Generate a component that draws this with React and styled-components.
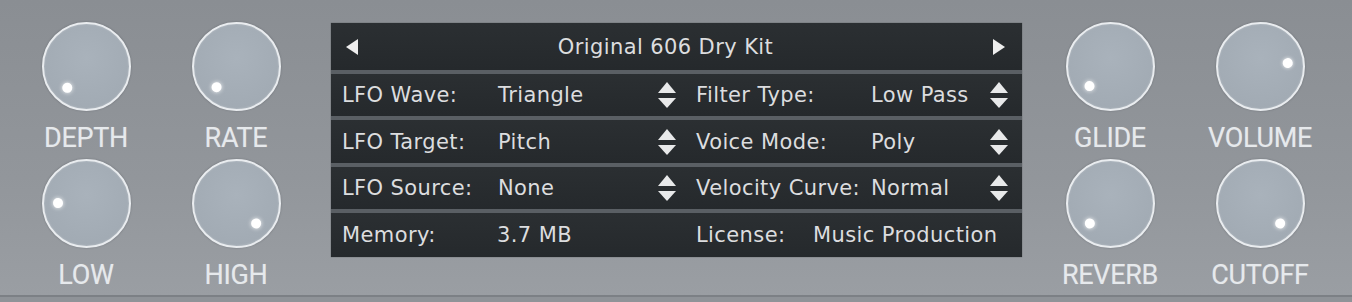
import React from "react";
import styled, { createGlobalStyle } from "styled-components";

const GlobalStyle = createGlobalStyle`
  html, body {
    margin: 0;
    padding: 0;
    background: #8f9398;
  }
`;

const leftKnobs = [
  { label: "DEPTH", angle: 222 },
  { label: "RATE", angle: 224 },
  { label: "LOW", angle: 272 },
  { label: "HIGH", angle: 134 },
];

const rightKnobs = [
  { label: "GLIDE", angle: 227 },
  { label: "VOLUME", angle: 82 },
  { label: "REVERB", angle: 226 },
  { label: "CUTOFF", angle: 134 },
];

const selectRows = [
  ["LFO Wave:", "Triangle", "Filter Type:", "Low Pass"],
  ["LFO Target:", "Pitch", "Voice Mode:", "Poly"],
  ["LFO Source:", "None", "Velocity Curve:", "Normal"],
];

const Spinner = () => (
  <SpinnerIcon width="18" height="26" viewBox="0 0 18 26">
    <polygon points="9,0 18,11 0,11" fill="#e8e9ea" />
    <polygon points="0,16 18,16 9,26" fill="#e8e9ea" />
  </SpinnerIcon>
);

const KnobGroup = ({ knobs }) => (
  <KnobGrid>
    {knobs.map((k) => (
      <KnobCell key={k.label}>
        <Knob>
          <Dot $angle={k.angle} />
        </Knob>
        <KnobLabel>{k.label}</KnobLabel>
      </KnobCell>
    ))}
  </KnobGrid>
);

const App = () => {
  return (
    <>
      <GlobalStyle />
      <Frame>
        <KnobGroup knobs={leftKnobs} />
        <Display>
          <Header>
            <svg width="12" height="16" viewBox="0 0 12 16">
              <polygon points="12,0 12,16 0,8" fill="#eeeeee" />
            </svg>
            <Title>Original 606 Dry Kit</Title>
            <svg width="12" height="16" viewBox="0 0 12 16">
              <polygon points="0,0 12,8 0,16" fill="#eeeeee" />
            </svg>
          </Header>
          {selectRows.map((r) => (
            <SelectRow key={r[0]}>
              <Text>{r[0]}</Text>
              <Text>{r[1]}</Text>
              <Spinner />
              <Text>{r[2]}</Text>
              <Text>{r[3]}</Text>
              <Spinner />
            </SelectRow>
          ))}
          <InfoRow>
            <Text>Memory:</Text>
            <Text>3.7 MB</Text>
            <Text>License:</Text>
            <Text>Music Production</Text>
          </InfoRow>
        </Display>
        <RightGroup>
          <KnobGroup knobs={rightKnobs} />
        </RightGroup>
      </Frame>
    </>
  );
};

const Frame = styled.div`
  width: 1352px;
  height: 297px;
  box-sizing: border-box;
  display: flex;
  align-items: flex-start;
  padding-left: 11px;
  background: linear-gradient(180deg, #8a8e93 0%, #92969b 60%, #9a9ea3 100%);
  border-bottom: 2px solid #7c8085;
`;

const KnobGrid = styled.div`
  display: grid;
  grid-template-columns: 150px 150px;
  row-gap: 6px;
  margin-top: 22px;
`;

const RightGroup = styled.div`
  margin-left: 13px;
`;

const KnobCell = styled.div`
  display: flex;
  flex-direction: column;
  align-items: center;
`;

const Knob = styled.div`
  position: relative;
  width: 89px;
  height: 89px;
  box-sizing: border-box;
  border-radius: 50%;
  background: radial-gradient(circle at 50% 40%, #a9b2bb 0%, #a2abb4 70%, #9ea7b0 100%);
  border: 2.5px solid #e9ecef;
  box-shadow: 0 0 2px rgba(60, 64, 70, 0.45), inset 0 0 2px rgba(255, 255, 255, 0.3);
`;

const Dot = styled.span`
  position: absolute;
  left: 50%;
  top: 50%;
  width: 10px;
  height: 10px;
  margin: -5px 0 0 -5px;
  border-radius: 50%;
  background: #ffffff;
  box-shadow: 0 0 4px rgba(255, 255, 255, 0.9);
  transform: rotate(${(p) => p.$angle}deg) translateY(-28px);
`;

const KnobLabel = styled.div`
  margin-top: 12px;
  height: 30px;
  line-height: 30px;
  font-family: Roboto, "Liberation Sans", sans-serif;
  font-size: 27px;
  letter-spacing: -0.3px;
  color: #e6e9ec;
  text-shadow: 0 0 1px rgba(255, 255, 255, 0.3);
`;

const Display = styled.div`
  width: 691px;
  margin-left: 20px;
  margin-top: 23px;
  display: flex;
  flex-direction: column;
  gap: 4px;
  background: #5a5f64;
  box-shadow: 0 0 1px rgba(30, 32, 36, 0.6);
  font-family: "DejaVu Sans", Verdana, sans-serif;
  font-size: 21px;
  letter-spacing: 0.4px;
  color: #dcdddf;
`;

const RowBase = styled.div`
  background: linear-gradient(180deg, #2b2f32 0%, #25292c 100%);
  display: grid;
  align-items: center;
  white-space: nowrap;
`;

const Header = styled(RowBase)`
  height: 47px;
  grid-template-columns: 12px 1fr 12px;
  padding: 0 17px 0 15px;
`;

const Title = styled.div`
  text-align: center;
  padding-right: 20px;
`;

const SelectRow = styled(RowBase)`
  height: 42px;
  padding-left: 11px;
  grid-template-columns: 156px 160px 18px 20px 175px 119px 16px;
  & > :nth-child(4) {
    grid-column: 5;
  }
  &:nth-of-type(3) {
    height: 43px;
  }
`;

const InfoRow = styled(RowBase)`
  height: 44px;
  padding-left: 11px;
  grid-template-columns: 155px 199px 117px 1fr;
`;

const Text = styled.span`
  overflow: visible;
`;

const SpinnerIcon = styled.svg`
  display: block;
`;

export default App;
